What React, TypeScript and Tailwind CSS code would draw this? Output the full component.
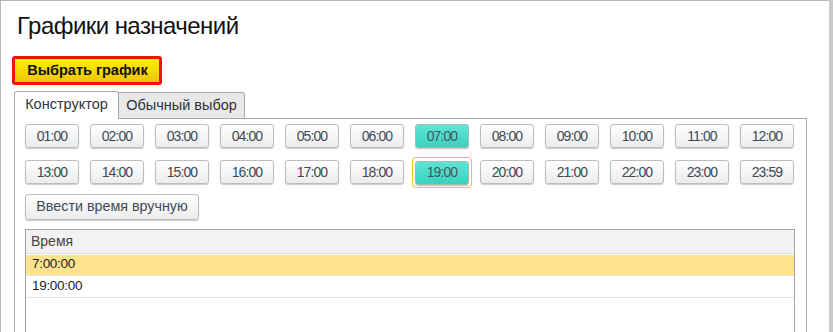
import React from "react";

const row1 = ["01:00", "02:00", "03:00", "04:00", "05:00", "06:00", "07:00", "08:00", "09:00", "10:00", "11:00", "12:00"];
const row2 = ["13:00", "14:00", "15:00", "16:00", "17:00", "18:00", "19:00", "20:00", "21:00", "22:00", "23:00", "23:59"];
const selected = ["07:00", "19:00"];

function TimeButton({ label }: { label: string }) {
  const active = selected.includes(label);
  const focused = label === "19:00";
  const btn = (
    <button
      className={
        active
          ? "w-[54px] h-[24px] rounded-[3px] border border-[#a9b8b5] bg-gradient-to-b from-[#5ce6d4] to-[#38d2be] shadow-[0_1px_1px_rgba(0,0,0,0.25)] text-[14px] tracking-[-0.9px] text-[#4a5560]"
          : "w-[54px] h-[24px] rounded-[3px] border border-[#bcbcbc] bg-gradient-to-b from-white to-[#ececec] shadow-[0_1px_1px_rgba(0,0,0,0.2)] text-[14px] tracking-[-0.9px] text-[#404a55]"
      }
    >
      {label}
    </button>
  );
  if (focused) {
    return <div className="outline outline-[1.5px] outline-[#f2c417] outline-offset-2 rounded-[1px]">{btn}</div>;
  }
  return btn;
}

export default function App() {
  return (
    <div
      className="w-[833px] h-[332px] overflow-hidden bg-white flex"
      style={{ fontFamily: '"Liberation Sans", Arial, sans-serif' }}
    >
      <div className="flex-1 border-l border-t border-[#b8b8b8] pt-[13px] pl-[11px] pr-[22px]">
        <h1 className="text-[24px] leading-[24px] text-[#111] pl-[5px] tracking-[-0.55px]">Графики назначений</h1>

        <button className="mt-[18px] h-[29px] w-[150px] rounded-[3px] border-[3px] border-[#f51010] bg-gradient-to-b from-[#fff000] to-[#f0c400] text-[14.5px] font-bold text-[#111] pl-[1px]">
          Выбрать график
        </button>

        <div className="mt-[5px] ml-[2px] flex items-end">
          <div className="h-[28px] w-[105px] border border-b-0 border-[#a9a9a9] rounded-t-[3px] bg-white flex items-center justify-center text-[14.5px] text-[#333] relative top-[1px] pb-[1px]">
            Конструктор
          </div>
          <div className="h-[27px] w-[126px] border border-l-0 border-[#a9a9a9] rounded-tr-[3px] bg-[#e8e8e8] flex items-center justify-center text-[14.5px] text-[#333] relative top-[1px]">
            Обычный выбор
          </div>
        </div>

        <div className="ml-[2px] border border-[#a9a9a9] h-[230px] pt-[5px] pl-[10px]">
          <div className="flex gap-[11px]">
            {row1.map((t) => (
              <TimeButton key={t} label={t} />
            ))}
          </div>
          <div className="flex gap-[11px] mt-[12px]">
            {row2.map((t) => (
              <TimeButton key={t} label={t} />
            ))}
          </div>
          <button className="mt-[9px] h-[26px] w-[174px] rounded-[3px] border border-[#bcbcbc] bg-gradient-to-b from-white to-[#ececec] shadow-[0_1px_1px_rgba(0,0,0,0.2)] text-[14.3px] text-[#404a55]">
            Ввести время вручную
          </button>

          <div className="mt-[9px] w-[770px] h-[120px] border border-[#a3a3a3]">
            <div className="h-[24px] bg-[#f2f2f2] border-b border-[#dcdcdc] flex items-center pl-[5px] text-[14px] text-[#444]">
              Время
            </div>
            <div className="h-[21px] bg-[#fde38e] border-t border-white flex items-center pl-[6px] text-[13.5px] text-[#222] tracking-[-0.3px]">
              7:00:00
            </div>
            <div className="h-[23px] border-t border-[#e4e4e4] border-b flex items-center pl-[6px] text-[13.5px] text-[#222] tracking-[-0.3px]">
              19:00:00
            </div>
          </div>
        </div>
      </div>
      <div className="w-[4px] h-full bg-[#c9c9c9]" />
    </div>
  );
}
